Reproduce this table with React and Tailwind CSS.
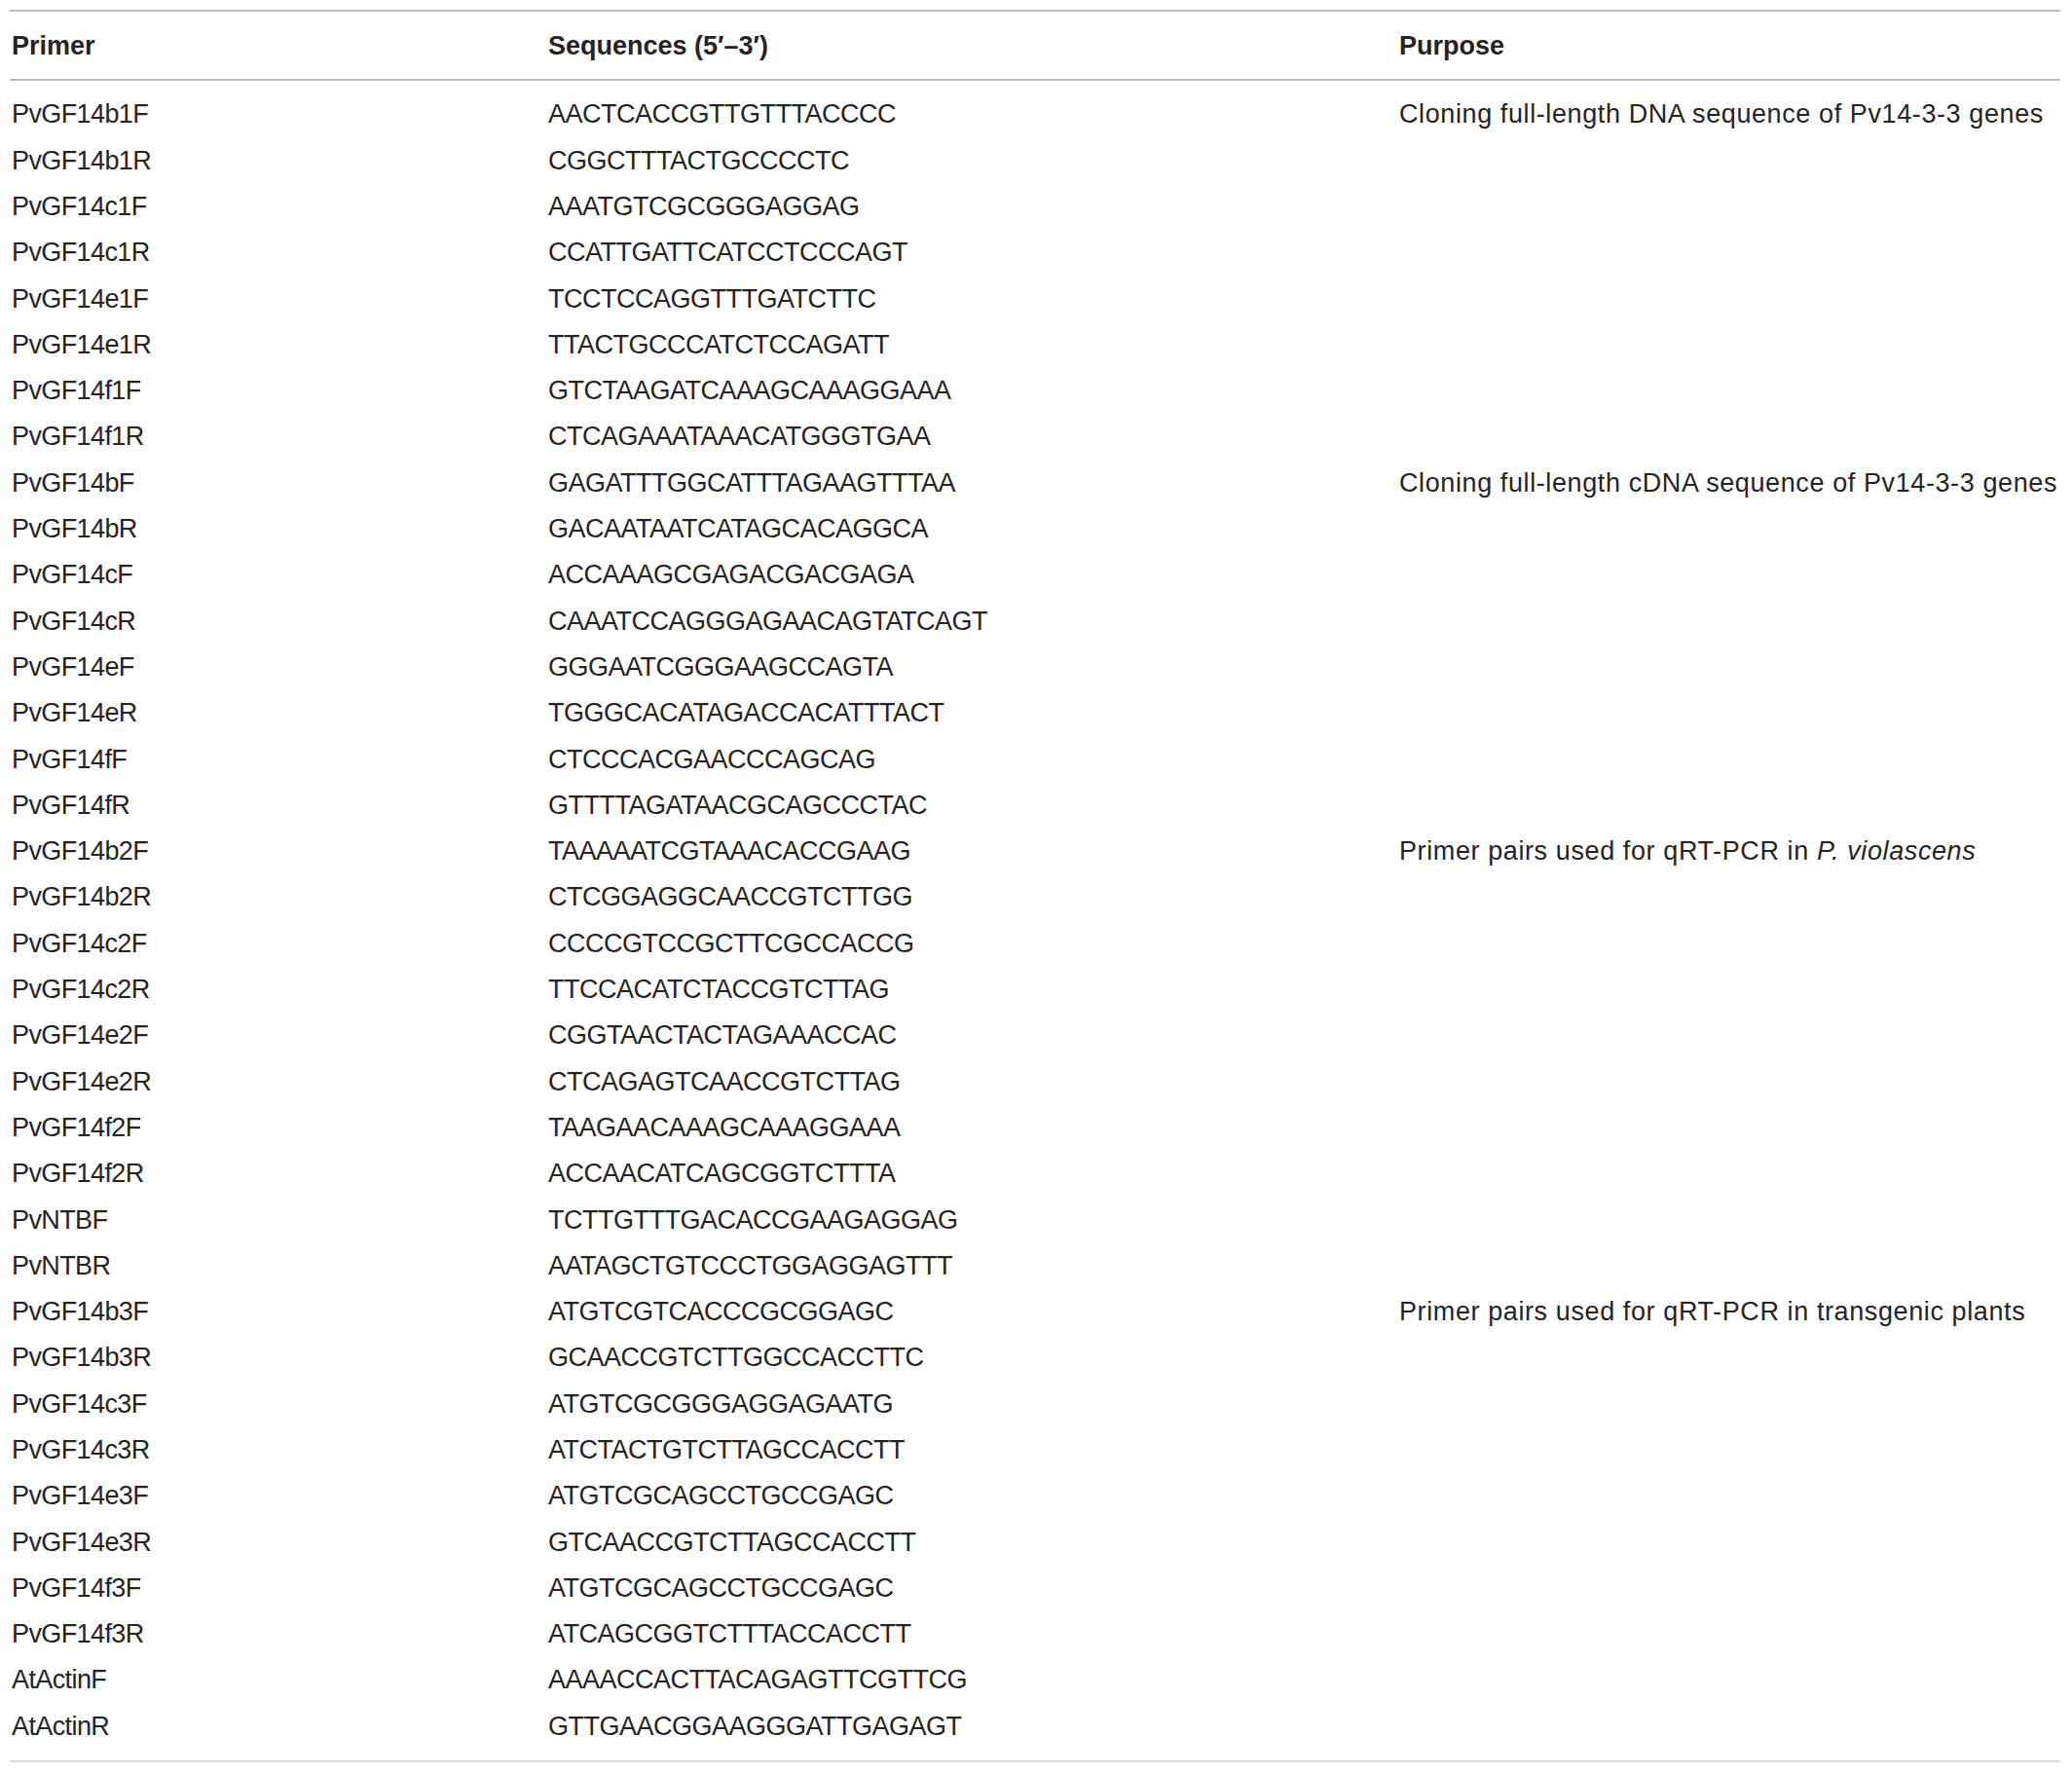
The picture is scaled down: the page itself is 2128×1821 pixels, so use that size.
const rows = [
  ["PvGF14b1F", "AACTCACCGTTGTTTACCCC", "Cloning full-length DNA sequence of Pv14-3-3 genes"],
  ["PvGF14b1R", "CGGCTTTACTGCCCCTC"],
  ["PvGF14c1F", "AAATGTCGCGGGAGGAG"],
  ["PvGF14c1R", "CCATTGATTCATCCTCCCAGT"],
  ["PvGF14e1F", "TCCTCCAGGTTTGATCTTC"],
  ["PvGF14e1R", "TTACTGCCCATCTCCAGATT"],
  ["PvGF14f1F", "GTCTAAGATCAAAGCAAAGGAAA"],
  ["PvGF14f1R", "CTCAGAAATAAACATGGGTGAA"],
  ["PvGF14bF", "GAGATTTGGCATTTAGAAGTTTAA", "Cloning full-length cDNA sequence of Pv14-3-3 genes"],
  ["PvGF14bR", "GACAATAATCATAGCACAGGCA"],
  ["PvGF14cF", "ACCAAAGCGAGACGACGAGA"],
  ["PvGF14cR", "CAAATCCAGGGAGAACAGTATCAGT"],
  ["PvGF14eF", "GGGAATCGGGAAGCCAGTA"],
  ["PvGF14eR", "TGGGCACATAGACCACATTTACT"],
  ["PvGF14fF", "CTCCCACGAACCCAGCAG"],
  ["PvGF14fR", "GTTTTAGATAACGCAGCCCTAC"],
  ["PvGF14b2F", "TAAAAATCGTAAACACCGAAG", "violascens"],
  ["PvGF14b2R", "CTCGGAGGCAACCGTCTTGG"],
  ["PvGF14c2F", "CCCCGTCCGCTTCGCCACCG"],
  ["PvGF14c2R", "TTCCACATCTACCGTCTTAG"],
  ["PvGF14e2F", "CGGTAACTACTAGAAACCAC"],
  ["PvGF14e2R", "CTCAGAGTCAACCGTCTTAG"],
  ["PvGF14f2F", "TAAGAACAAAGCAAAGGAAA"],
  ["PvGF14f2R", "ACCAACATCAGCGGTCTTTA"],
  ["PvNTBF", "TCTTGTTTGACACCGAAGAGGAG"],
  ["PvNTBR", "AATAGCTGTCCCTGGAGGAGTTT"],
  ["PvGF14b3F", "ATGTCGTCACCCGCGGAGC", "Primer pairs used for qRT-PCR in transgenic plants"],
  ["PvGF14b3R", "GCAACCGTCTTGGCCACCTTC"],
  ["PvGF14c3F", "ATGTCGCGGGAGGAGAATG"],
  ["PvGF14c3R", "ATCTACTGTCTTAGCCACCTT"],
  ["PvGF14e3F", "ATGTCGCAGCCTGCCGAGC"],
  ["PvGF14e3R", "GTCAACCGTCTTAGCCACCTT"],
  ["PvGF14f3F", "ATGTCGCAGCCTGCCGAGC"],
  ["PvGF14f3R", "ATCAGCGGTCTTTACCACCTT"],
  ["AtActinF", "AAAACCACTTACAGAGTTCGTTCG"],
  ["AtActinR", "GTTGAACGGAAGGGATTGAGAGT"],
];

function Purpose({ text }) {
  if (text === "violascens") {
    return (
      <>
        Primer pairs used for qRT-PCR in <i>P. violascens</i>
      </>
    );
  }
  return text || null;
}

export default function App() {
  return (
    <div
      className="w-[2128px] h-[1821px] bg-white pt-[10px] text-[#262324] text-[27px]"
      style={{ fontFamily: '"Liberation Sans", Arial, sans-serif' }}
    >
      <div className="ml-[10px] w-[2106px]">
        <div className="grid grid-cols-[551px_874px_1fr] h-[73px] items-center border-t-2 border-b-2 border-[#bdbdbd] font-bold">
          <div className="pl-[2px] pt-[1px]">Primer</div>
          <div className="pl-[2px] pt-[1px]">Sequences (5′–3′)</div>
          <div className="pl-[2px] pt-[1px]">Purpose</div>
        </div>
        <div className="pt-[11px] pb-[11px] border-b-2 border-[#d9d9d9]">
          {rows.map((r) => (
            <div
              key={r[0]}
              className="grid grid-cols-[551px_874px_1fr] h-[47.3px] items-center whitespace-nowrap"
            >
              <div className="pl-[2px] tracking-[-0.6px]">{r[0]}</div>
              <div className="pl-[2px] tracking-[-0.5px]">{r[1]}</div>
              <div className="pl-[2px] tracking-[0.6px]">
                <Purpose text={r[2]} />
              </div>
            </div>
          ))}
        </div>
      </div>
    </div>
  );
}
